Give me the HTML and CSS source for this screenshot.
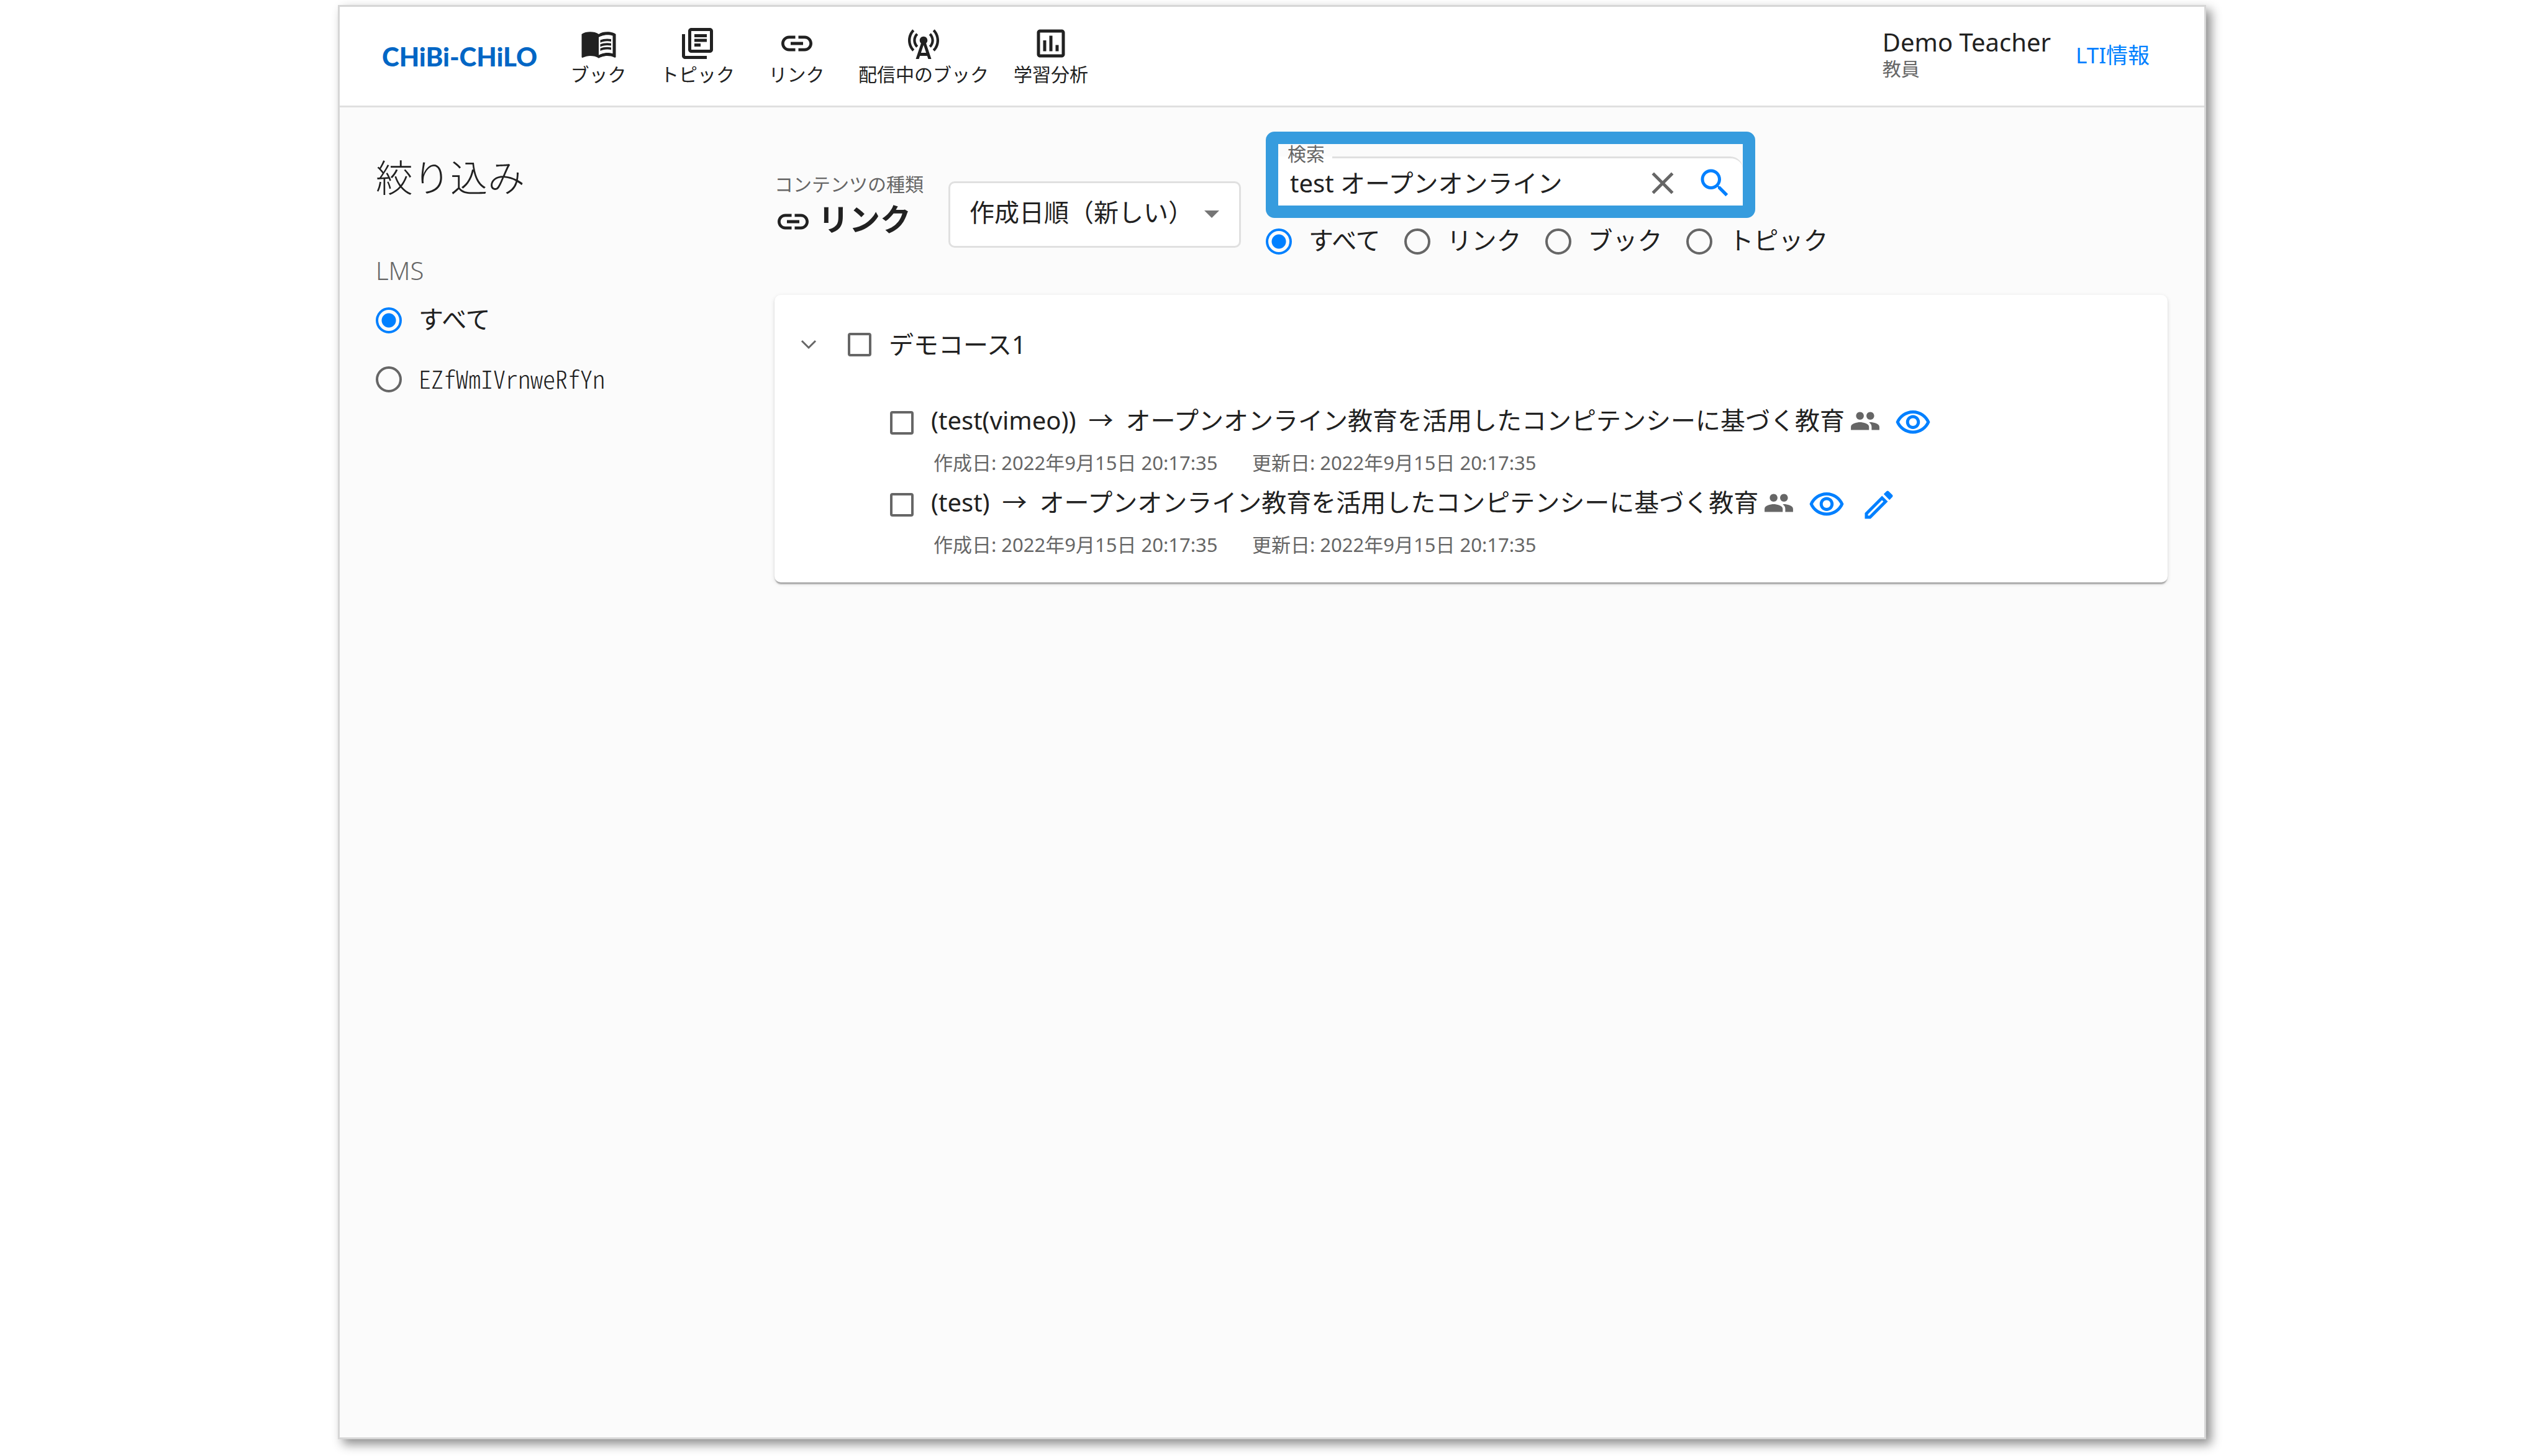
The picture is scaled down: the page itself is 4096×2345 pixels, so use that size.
FILE: index.html
```html
<!DOCTYPE html>
<html lang="ja">
<head>
<meta charset="utf-8">
<meta name="viewport" content="width=device-width, initial-scale=1">
<title>CHiBi-CHiLO</title>
<link rel="stylesheet" href="styles.css">
</head>
<body>
<div class="app">
  <header class="appbar">
    <a class="logo" href="#">CHiBi-CHiLO</a>
    <nav class="nav">
      <a class="nav-item" href="#">
        <svg class="icon" viewBox="0 0 24 24" aria-hidden="true"><path d="M21 5c-1.11-.35-2.33-.5-3.5-.5-1.95 0-4.05.4-5.5 1.5-1.45-1.1-3.55-1.5-5.5-1.5S2.45 4.900 1 6v14.650c0 .25.25.5.5.5.1 0 .15-.05.25-.05C3.100 20.450 5.050 20 6.500 20c1.950 0 4.050.4 5.500 1.500 1.350-.85 3.800-1.500 5.500-1.500 1.650 0 3.350.3 4.750 1.050.1.05.15.05.25.05.25 0 .5-.25.5-.5V6c-.6-.45-1.250-.75-2-1zm0 13.500c-1.100-.35-2.300-.5-3.500-.5-1.700 0-4.150.65-5.500 1.500V8c1.350-.85 3.800-1.500 5.500-1.500 1.200 0 2.400.15 3.500.5v11.500z"/><path d="M17.500 10.500c.88 0 1.730.09 2.500.26V9.240c-.79-.15-1.640-.24-2.500-.24-1.700 0-3.240.29-4.500.83v1.660c1.130-.64 2.700-.99 4.500-.99zM13 12.490v1.660c1.130-.64 2.700-.99 4.500-.99.88 0 1.730.09 2.500.26V11.900c-.79-.15-1.640-.24-2.500-.24-1.700 0-3.240.3-4.500.83zM17.500 14.330c-1.700 0-3.240.29-4.500.83v1.660c1.130-.64 2.700-.99 4.500-.99.88 0 1.730.09 2.500.26v-1.520c-.79-.16-1.640-.24-2.500-.24z"/></svg>
        <span>ブック</span>
      </a>
      <a class="nav-item" href="#">
        <svg class="icon" viewBox="0 0 24 24" aria-hidden="true"><path d="M4 6H2v14c0 1.100.9 2 2 2h14v-2H4V6zm16-4H8c-1.100 0-2 .9-2 2v12c0 1.100.9 2 2 2h12c1.100 0 2-.9 2-2V4c0-1.100-.9-2-2-2zm0 14H8V4h12v12zM10 9h8v2h-8zm0 3h4v2h-4zm0-6h8v2h-8z"/></svg>
        <span>トピック</span>
      </a>
      <a class="nav-item" href="#">
        <svg class="icon" viewBox="0 0 24 24" aria-hidden="true"><path d="M3.900 12c0-1.710 1.390-3.100 3.100-3.100h4V7H7c-2.760 0-5 2.240-5 5s2.240 5 5 5h4v-1.900H7c-1.710 0-3.100-1.390-3.100-3.100zM8 13h8v-2H8v2zm9-6h-4v1.900h4c1.710 0 3.100 1.390 3.100 3.100s-1.390 3.100-3.100 3.100h-4V17h4c2.760 0 5-2.240 5-5s-2.240-5-5-5z"/></svg>
        <span>リンク</span>
      </a>
      <a class="nav-item" href="#">
        <svg class="icon" viewBox="0 0 24 24" aria-hidden="true"><path d="M7.300 14.700l1.200-1.200c-1-1-1.500-2.300-1.500-3.500 0-1.300.5-2.600 1.500-3.500L7.300 5.300c-1.300 1.300-2 3-2 4.700s.7 3.400 2 4.700zM19.100 2.900l-1.200 1.200c1.600 1.600 2.400 3.800 2.400 5.900 0 2.100-.8 4.300-2.400 5.900l1.200 1.200c2-2 2.900-4.500 2.900-7.100 0-2.600-1-5.100-2.900-7.100zM6.100 4.100L4.900 2.900C3 4.900 2 7.400 2 10c0 2.600 1 5.100 2.900 7.100l1.200-1.200c-1.600-1.600-2.400-3.800-2.400-5.900 0-2.100.8-4.300 2.400-5.900zM16.700 14.700c1.300-1.300 2-3 2-4.700-.1-1.700-.7-3.400-2-4.700l-1.200 1.200c1 1 1.500 2.300 1.500 3.500 0 1.300-.5 2.600-1.500 3.500l1.200 1.200zM14.500 10c0-1.380-1.120-2.500-2.500-2.500S9.500 8.620 9.500 10c0 .76.34 1.420.87 1.880L7 22h2l.67-2h4.670l.66 2h2l-3.370-10.120c.53-.46.87-1.120.87-1.880zm-4.170 8L12 13l1.670 5h-3.340z"/></svg>
        <span>配信中のブック</span>
      </a>
      <a class="nav-item" href="#">
        <svg class="icon" viewBox="0 0 24 24" aria-hidden="true"><path d="M19 3H5c-1.100 0-2 .9-2 2v14c0 1.100.9 2 2 2h14c1.100 0 2-.9 2-2V5c0-1.100-.9-2-2-2zm0 16H5V5h14v14zM7 10h2v7H7zm4-3h2v10h-2zm4 6h2v4h-2z"/></svg>
        <span>学習分析</span>
      </a>
    </nav>
    <div class="user">
      <span class="user-name">Demo Teacher</span>
      <span class="user-role">教員</span>
    </div>
    <button class="lti" type="button">LTI情報</button>
  </header>

  <div class="body">
    <aside class="sidebar">
      <h2 class="side-title">絞り込み</h2>
      <fieldset class="filter">
        <legend class="filter-legend">LMS</legend>
        <label class="choice filter-row"><input class="radio" type="radio" name="lms" checked><span class="choice-text">すべて</span></label>
        <label class="choice filter-row"><input class="radio" type="radio" name="lms"><span class="choice-text code">EZfWmIVrnweRfYn</span></label>
      </fieldset>
    </aside>

    <main class="main">
      <div class="toolbar">
        <div class="kind">
          <span class="kind-label">コンテンツの種類</span>
          <h1 class="kind-name">
            <svg class="icon" viewBox="0 0 24 24" aria-hidden="true"><path d="M3.900 12c0-1.710 1.390-3.100 3.100-3.100h4V7H7c-2.760 0-5 2.240-5 5s2.240 5 5 5h4v-1.900H7c-1.710 0-3.100-1.390-3.100-3.100zM8 13h8v-2H8v2zm9-6h-4v1.900h4c1.710 0 3.100 1.390 3.100 3.100s-1.390 3.100-3.100 3.100h-4V17h4c2.760 0 5-2.240 5-5s-2.240-5-5-5z"/></svg>
            <span>リンク</span>
          </h1>
        </div>
        <div class="sort">
          <select class="sort-select" aria-label="並び順">
            <option>作成日順（新しい）</option>
          </select>
          <svg class="sort-arrow" viewBox="0 0 24 12" aria-hidden="true"><path d="M0 0h24L12 12z"/></svg>
        </div>
        <form class="search">
          <div class="search-frame">
            <fieldset class="search-field">
              <legend class="search-legend"><label for="q">検索</label></legend>
              <div class="search-row">
                <input class="search-input" id="q" type="text" value="test オープンオンライン">
                <button class="icon-button muted" type="button" aria-label="消去"><svg class="icon" viewBox="0 0 24 24" aria-hidden="true"><path d="M19 6.410L17.590 5 12 10.590 6.410 5 5 6.410 10.590 12 5 17.590 6.410 19 12 13.410 17.590 19 19 17.590 13.410 12z"/></svg></button>
                <button class="icon-button" type="submit" aria-label="検索する"><svg class="icon" viewBox="0 0 24 24" aria-hidden="true"><path d="M15.500 14h-.79l-.28-.27C15.410 12.590 16 11.110 16 9.500 16 5.910 13.090 3 9.500 3S3 5.910 3 9.500 5.910 16 9.500 16c1.610 0 3.090-.59 4.230-1.570l.27.28v.79l5 4.990L20.490 19l-4.990-5zm-6 0C7.010 14 5 11.990 5 9.500S7.010 5 9.500 5 14 7.010 14 9.500 11.990 14 9.500 14z"/></svg></button>
              </div>
            </fieldset>
          </div>
          <div class="targets">
            <label class="choice"><input class="radio" type="radio" name="target" checked><span class="choice-text">すべて</span></label>
            <label class="choice"><input class="radio" type="radio" name="target"><span class="choice-text">リンク</span></label>
            <label class="choice"><input class="radio" type="radio" name="target"><span class="choice-text">ブック</span></label>
            <label class="choice"><input class="radio" type="radio" name="target"><span class="choice-text">トピック</span></label>
          </div>
        </form>
      </div>

      <section class="paper">
        <div class="course">
          <button class="icon-button muted" type="button" aria-label="折りたたむ"><svg class="chevron" viewBox="0 0 26 16" aria-hidden="true"><path d="M2 2l11 11L24 2"/></svg></button>
          <label class="check-row"><input class="check" type="checkbox"><span>デモコース1</span></label>
        </div>
        <ul class="items">
          <li class="item">
            <div class="item-head">
              <label class="check-row"><input class="check" type="checkbox"><span class="item-title"><span>(test(vimeo))</span><span>→</span><span>オープンオンライン教育を活用したコンピテンシーに基づく教育</span></span></label>
              <svg class="icon-small muted" viewBox="0 0 24 24" role="img" aria-label="共有"><path d="M16 11c1.660 0 2.990-1.340 2.990-3S17.660 5 16 5c-1.660 0-3 1.340-3 3s1.340 3 3 3zm-8 0c1.660 0 2.990-1.340 2.990-3S9.660 5 8 5C6.340 5 5 6.340 5 8s1.340 3 3 3zm0 2c-2.330 0-7 1.170-7 3.500V19h14v-2.500c0-2.330-4.670-3.500-7-3.500zm8 0c-.29 0-.62.02-.97.05 1.160.84 1.970 1.970 1.970 3.450V19h6v-2.500c0-2.330-4.670-3.500-7-3.500z"/></svg>
              <div class="actions">
                <button class="icon-button" type="button" aria-label="プレビュー"><svg class="icon" viewBox="0 0 24 24" aria-hidden="true"><path d="M12 6c3.790 0 7.170 2.130 8.820 5.500C19.170 14.870 15.790 17 12 17s-7.170-2.130-8.820-5.500C4.830 8.130 8.210 6 12 6m0-2C7 4 2.730 7.110 1 11.500 2.730 15.890 7 19 12 19s9.270-3.110 11-7.500C21.270 7.110 17 4 12 4zm0 5c1.380 0 2.500 1.120 2.500 2.500S13.380 14 12 14s-2.500-1.120-2.500-2.500S10.620 9 12 9m0-2c-2.480 0-4.500 2.020-4.500 4.500S9.520 16 12 16s4.500-2.020 4.500-4.500S14.480 7 12 7z"/></svg></button>
              </div>
            </div>
            <div class="dates"><span>作成日: 2022年9月15日 20:17:35</span><span>更新日: 2022年9月15日 20:17:35</span></div>
          </li>
          <li class="item">
            <div class="item-head">
              <label class="check-row"><input class="check" type="checkbox"><span class="item-title"><span>(test)</span><span>→</span><span>オープンオンライン教育を活用したコンピテンシーに基づく教育</span></span></label>
              <svg class="icon-small muted" viewBox="0 0 24 24" role="img" aria-label="共有"><path d="M16 11c1.660 0 2.990-1.340 2.990-3S17.660 5 16 5c-1.660 0-3 1.340-3 3s1.340 3 3 3zm-8 0c1.660 0 2.990-1.340 2.990-3S9.660 5 8 5C6.340 5 5 6.340 5 8s1.340 3 3 3zm0 2c-2.330 0-7 1.170-7 3.500V19h14v-2.500c0-2.330-4.670-3.500-7-3.500zm8 0c-.29 0-.62.02-.97.05 1.160.84 1.970 1.970 1.970 3.450V19h6v-2.500c0-2.330-4.670-3.500-7-3.500z"/></svg>
              <div class="actions">
                <button class="icon-button" type="button" aria-label="プレビュー"><svg class="icon" viewBox="0 0 24 24" aria-hidden="true"><path d="M12 6c3.790 0 7.170 2.130 8.820 5.500C19.170 14.870 15.790 17 12 17s-7.170-2.130-8.820-5.500C4.830 8.130 8.210 6 12 6m0-2C7 4 2.730 7.110 1 11.500 2.730 15.890 7 19 12 19s9.270-3.110 11-7.500C21.270 7.110 17 4 12 4zm0 5c1.380 0 2.500 1.120 2.500 2.500S13.380 14 12 14s-2.500-1.120-2.500-2.500S10.620 9 12 9m0-2c-2.480 0-4.500 2.020-4.500 4.500S9.520 16 12 16s4.500-2.020 4.500-4.500S14.480 7 12 7z"/></svg></button>
                <button class="icon-button" type="button" aria-label="編集"><svg class="icon" viewBox="0 0 24 24" aria-hidden="true"><path d="M14.060 9.020l.92.92L5.920 19H5v-.92l9.060-9.060M17.660 3c-.25 0-.51.1-.7.29l-1.830 1.830 3.750 3.750 1.830-1.830c.39-.39.39-1.020 0-1.410l-2.340-2.340c-.2-.2-.45-.29-.71-.29zm-3.600 3.190L3 17.250V21h3.750L17.810 9.940l-3.750-3.750z"/></svg></button>
              </div>
            </div>
            <div class="dates"><span>作成日: 2022年9月15日 20:17:35</span><span>更新日: 2022年9月15日 20:17:35</span></div>
          </li>
        </ul>
      </section>
    </main>
  </div>
</div>
</body>
</html>
```

FILE: styles.css
```css
:root {
  --text: #212121;
  --muted: #666666;
  --primary: #0080ff;
  --line: #e0e0e0;
  --page: #fbfbfb;
}

* { box-sizing: border-box; }

body {
  margin: 0;
  background: #ffffff;
  color: var(--text);
  font-family: "Noto Sans", "Noto Sans CJK JP", sans-serif;
  font-size: 40px;
  font-weight: 400;
  line-height: 60px;
}

button, input, select { font: inherit; color: inherit; }
h1, h2, ul, fieldset { margin: 0; padding: 0; }
fieldset { border: 0; min-width: 0; }

.app {
  margin: 8px 544px 27px;
  min-height: calc(100vh - 35px);
  border: 3px solid #d6d6d6;
  background: var(--page);
  box-shadow: 8px 8px 16px rgba(0, 0, 0, 0.45);
}

.icon { display: block; width: 60px; height: 60px; fill: currentColor; flex: none; }
.icon-small { display: block; width: 50px; height: 50px; fill: currentColor; flex: none; }

.icon-button {
  display: grid;
  place-items: center;
  width: 60px;
  height: 60px;
  padding: 0;
  border: 0;
  background: none;
  color: var(--primary);
  flex: none;
}

.muted, .icon-button.muted { color: var(--muted); }

/* App bar */
.appbar {
  display: flex;
  align-items: center;
  height: 162px;
  padding: 0 68px;
  border-bottom: 3px solid var(--line);
  background: #ffffff;
}

.logo {
  width: 269px;
  color: #0066c5;
  font-family: Lato, sans-serif;
  font-size: 42px;
  font-weight: 900;
  text-decoration: none;
}

.nav { display: flex; flex: 1; }

.nav-item {
  display: flex;
  flex-direction: column;
  align-items: center;
  min-width: 159px;
  padding: 0 20px 2px;
  color: var(--text);
  font-size: 30px;
  line-height: 40px;
  text-decoration: none;
}

.user { display: flex; flex-direction: column; margin-right: 20px; padding-bottom: 4px; }
.user-name { line-height: 43px; }
.user-role { color: var(--muted); font-size: 30px; line-height: 43px; }

.lti {
  padding: 0 20px 4px;
  border: 0;
  background: none;
  color: var(--primary);
  font-size: 35px;
}

/* Sidebar */
.body { display: grid; grid-template-columns: 642px 1fr; padding: 0 59px 0 58px; }
.sidebar { padding-top: 73px; }
.side-title { font-size: 60px; font-weight: 300; line-height: 80px; }
.filter { margin-top: 82px; }
.filter-legend { padding: 0; margin-bottom: 4px; color: var(--muted); font-weight: 300; line-height: 56px; }
.choice { display: flex; align-items: center; gap: 27px; }
.choice-text { padding-bottom: 4px; line-height: 56px; }
.filter-row { height: 95px; }
.code { font-family: "Noto Sans CJK JP", sans-serif; font-weight: 300; font-feature-settings: "hwid"; }

.radio {
  appearance: none;
  width: 42px;
  height: 42px;
  margin: 0;
  border: 4px solid var(--muted);
  border-radius: 50%;
  flex: none;
}

.radio:checked {
  border-color: var(--primary);
  background: radial-gradient(circle, var(--primary) 11px, transparent 12px);
}

/* Toolbar */
.main { padding-top: 39px; min-width: 0; }
.toolbar { display: flex; align-items: flex-end; gap: 40px; }
.kind { margin-bottom: 32px; }
.kind-label { display: block; color: var(--muted); font-size: 30px; line-height: 44px; }

.kind-name {
  display: flex;
  align-items: center;
  gap: 10px;
  font-size: 50px;
  font-weight: 700;
  line-height: 68px;
}

.kind-name .icon { margin-top: 8px; }

.sort { position: relative; width: 471px; margin-bottom: 20px; }

.sort-select {
  appearance: none;
  display: block;
  width: 100%;
  height: 107px;
  padding: 0 80px 8px 31px;
  border: 3px solid var(--line);
  border-radius: 10px;
  background: #ffffff;
}

.sort-arrow {
  position: absolute;
  right: 35px;
  top: 47px;
  width: 24px;
  height: 12px;
  fill: #757575;
  pointer-events: none;
}

.search-frame {
  width: 788px;
  border: 20px solid #369cde;
  border-radius: 14px;
  background: var(--page);
}

.search-field {
  margin-top: 1px;
  padding-bottom: 6px;
  border-top: 3px solid var(--line);
  border-radius: 0 20px 0 0;
  background: #ffffff;
}

.search-legend {
  padding: 0 12px 11px 15px;
  color: var(--muted);
  font-size: 30px;
  line-height: 30px;
}

.search-legend label { display: block; }

.search-row { display: flex; align-items: center; gap: 24px; margin-top: -9px; padding: 0 15px 0 19px; }

.search-input {
  flex: 1;
  min-width: 0;
  height: 60px;
  padding: 0;
  border: 0;
  background: none;
  outline: 0;
}

.targets { display: flex; gap: 38px; height: 60px; margin-top: 8px; }

/* Result list */
.paper {
  margin-top: 56px;
  padding: 50px 25px 39px;
  border-radius: 10px;
  background: #ffffff;
  box-shadow: 0 5px 2px -2px rgba(0, 0, 0, 0.2), 0 2px 2px rgba(0, 0, 0, 0.14), 0 2px 7px rgba(0, 0, 0, 0.12);
}

.course { display: flex; align-items: center; gap: 33px; }
.chevron { width: 26px; height: 16px; fill: none; stroke: currentColor; stroke-width: 3; }
.check-row { display: flex; align-items: center; gap: 28px; }

.check {
  appearance: none;
  width: 38px;
  height: 38px;
  margin: 0;
  border: 4px solid var(--muted);
  border-radius: 4px;
  flex: none;
}

.items { display: grid; gap: 16px; margin-top: 66px; padding-left: 161px; list-style: none; }
.item { display: grid; gap: 12px; }
.item-head { display: flex; align-items: center; gap: 8px; }
.item-head .icon-small { margin-bottom: 6px; }
.item-title { display: flex; gap: 20px; padding-bottom: 8px; line-height: 52px; }
.actions { display: flex; gap: 24px; margin-left: 14px; }
.dates { display: grid; grid-template-columns: 513px 1fr; padding-left: 70px; color: var(--muted); font-size: 31px; line-height: 44px; }
```
